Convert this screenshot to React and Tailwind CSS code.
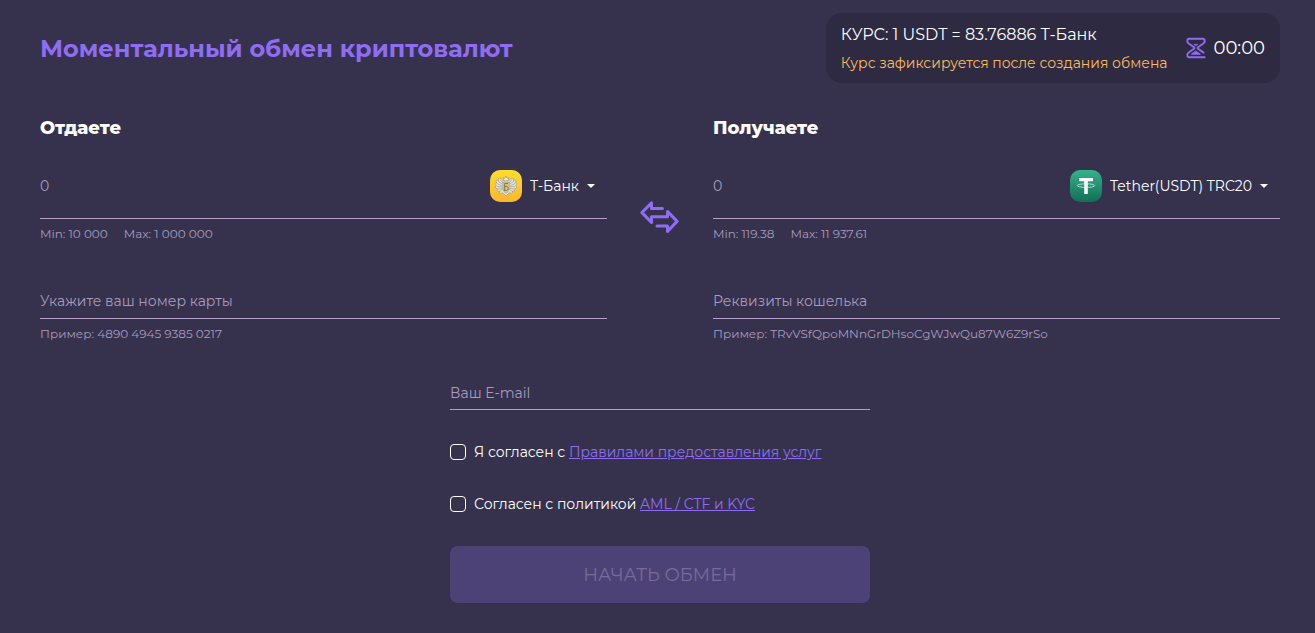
import React, { useState } from 'react'

const HourglassIcon = () => (
    <svg width="20" height="22" viewBox="0 0 20 22" fill="none" stroke="#8f6df2" strokeWidth="1.9" strokeLinecap="round" strokeLinejoin="round" aria-hidden="true">
        <path d="M18.6 4.6V3.2C18.6 2.2 18 1.8 17.2 1.8H2.8C1.9 1.8 1.4 2.3 1.4 3.2V4.4C1.4 5.6 2.2 6.2 3 6.7L8 10.2C8.6 10.7 8.6 11.3 8 11.8L3 15.3C2.2 15.8 1.4 16.5 1.4 17.6V18.8C1.4 19.7 1.9 20.2 2.8 20.2H18.6" />
        <path d="M18.6 4.6C18.6 5.7 17.8 6.3 17 6.8L12 10.2C11.4 10.7 11.4 11.3 12 11.8L17.6 15.6" />
        <path d="M8.2 7.4H11.8L10 8.6Z" fill="#8f6df2" strokeWidth="0.8" />
        <path d="M10 14.2L14.4 17.2H5.6Z" fill="#8f6df2" strokeWidth="1" />
    </svg>
)

const SwapIcon = () => (
    <svg width="40" height="36" viewBox="0 0 40 36" fill="none" stroke="#8f6df2" strokeWidth="3" strokeLinejoin="round" strokeLinecap="round" aria-hidden="true">
        <path d="M22.4 8.4H11.5V2.8L1.9 12.6L11.5 22.4V16.8H27.5V11.4L37.1 21.4L27.5 31.4V26H17" />
    </svg>
)

const BankIcon = () => (
    <svg width="32" height="32" viewBox="0 0 32 32" aria-hidden="true">
        <defs>
            <linearGradient id="bank-bg" x1="0" y1="0" x2="0" y2="1">
                <stop offset="0" stopColor="#ffdc2e" />
                <stop offset="1" stopColor="#fdb62d" />
            </linearGradient>
        </defs>
        <rect width="32" height="32" rx="10" fill="url(#bank-bg)" />
        <g fill="#e2e2dc" stroke="#85847c" strokeWidth="0.5">
            <path d="M13 10.5C10 7 7.5 8 8.5 10.5C5.5 9.5 5.5 11.5 7 12.8C4.5 12.6 4.5 15 6.5 15.6C4.5 16.8 5.5 19 7.5 18.6C6.5 20.8 8 22 9.8 21C9 23.4 11 24.4 12.5 22.6L16 26L19.5 22.6C21 24.4 23 23.4 22.2 21C24 22 25.5 20.8 24.5 18.6C26.5 19 27.5 16.8 25.5 15.6C27.5 15 27.5 12.6 25 12.8C26.5 11.5 26.5 9.5 23.5 10.5C24.5 8 22 7 19 10.5L16 9Z" />
            <path d="M8 11L12 14M7 13.5L12 16M7 16.5L12 17M8 19L12 18.5M24 11L20 14M25 13.5L20 16M25 16.5L20 17M24 19L20 18.5M10 9.5L13 13M22 9.5L19 13M10 21.5L13 18.5M22 21.5L19 18.5" />
            <path d="M13.2 7.5L15 8.5L16 6L17 8.5L18.8 7.5L18 10.6H14Z" fill="#f3f3ee" />
            <path d="M12.8 12H19.2V18.8C19.2 21 17.5 22.2 16 23.2C14.5 22.2 12.8 21 12.8 18.8Z" fill="#d9c777" />
        </g>
        <path d="M14.7 20.4V13.5H18M14.7 16.4H16.4C18.8 16.4 18.8 20.4 16.4 20.4H14" fill="none" stroke="#7a7347" strokeWidth="0.9" />
    </svg>
)

const TetherIcon = () => (
    <svg width="32" height="32" viewBox="0 0 32 32" fill="none" aria-hidden="true">
        <defs>
            <linearGradient id="tether-bg" x1="0" y1="0" x2="0" y2="1">
                <stop offset="0" stopColor="#35b28b" />
                <stop offset="1" stopColor="#126e54" />
            </linearGradient>
        </defs>
        <rect width="32" height="32" rx="10" fill="url(#tether-bg)" />
        <path d="M9 8H23V11.3H17.8V24H14.2V11.3H9Z" fill="#fff" />
        <ellipse cx="16" cy="15.6" rx="8.8" ry="1.8" stroke="#d5efe6" strokeWidth="0.8" />
    </svg>
)

const CurrencySelect = ({ id, label, icon, options }) => (
    <div className="flex items-center shrink-0 pr-2">
        {icon}
        <div className="relative">
            <select
                id={id}
                aria-label={label}
                className="field-sizing-content appearance-none bg-transparent pl-2 pr-5 h-8 text-sm text-white cursor-pointer focus:outline-none"
            >
                {options.map((option) => (
                    <option key={option} className="bg-[#2e2a41]">
                        {option}
                    </option>
                ))}
            </select>
            <svg className="absolute right-1 top-3.5 pointer-events-none" width="8" height="4" viewBox="0 0 8 4" aria-hidden="true">
                <path d="M0 0H8L4 4Z" fill="#fff" />
            </svg>
        </div>
    </div>
)

const ExchangeSide = ({ id, title, icon, currencies, min, max, placeholder, example }) => (
    <section className="min-w-0">
        <h2 className="text-lg leading-6 font-extrabold">{title}</h2>
        <div className="flex items-center h-[65px] mt-3.5 border-b border-[#b5a1c9]">
            <input
                id={`${id}-amount`}
                aria-label={title}
                placeholder="0"
                className="flex-1 min-w-0 h-10 bg-transparent text-sm placeholder:text-[#a99bbd] focus:outline-none"
            />
            <CurrencySelect id={`${id}-currency`} label={title} icon={icon} options={currencies} />
        </div>
        <div className="flex gap-4 mt-[5px] text-xs leading-5 text-[#a99bbd]">
            <span>Min: {min}</span>
            <span>Max: {max}</span>
        </div>
        <input
            id={`${id}-account`}
            aria-label={placeholder}
            placeholder={placeholder}
            className="block w-full h-[35px] mt-10 border-b border-[#b5a1c9] bg-transparent text-sm placeholder:text-[#a99bbd] focus:outline-none"
        />
        <p className="mt-[5px] text-xs leading-5 text-[#a99bbd]">Пример: {example}</p>
    </section>
)

const Agreement = ({ id, text, link, checked, onChange }) => (
    <div className="flex items-center gap-2 h-5 text-sm whitespace-nowrap">
        <input
            id={id}
            type="checkbox"
            checked={checked}
            onChange={(e) => onChange(e.target.checked)}
            className="appearance-none size-4 rounded border border-white checked:bg-[#8f6df2]"
        />
        <label htmlFor={id}>
            {text}{' '}
            <a href="#" className="text-[#8f6df2] underline">
                {link}
            </a>
        </label>
    </div>
)

const App = () => {
    const [rules, setRules] = useState(false)
    const [aml, setAml] = useState(false)

    return (
        <main className="min-h-screen bg-[#36324e] pt-[13px] pb-[30px] pl-10 pr-[35px] font-['Montserrat','Inter',sans-serif] text-white">
            <header className="flex items-center justify-between">
                <h1 className="pt-0.5 text-2xl leading-8 font-bold text-[#8f6df2]">Моментальный обмен криптовалют</h1>
                <div className="flex items-center gap-[18px] h-[70px] px-[15px] rounded-2xl bg-[#2e2a41]">
                    <div className="pt-0.5">
                        <p className="text-base leading-7">КУРС: 1 USDT = 83.76886 Т-Банк</p>
                        <p className="text-sm leading-7 text-[#fbbc5a]">Курс зафиксируется после создания обмена</p>
                    </div>
                    <div className="flex items-center gap-2 text-lg">
                        <HourglassIcon />
                        <span>00:00</span>
                    </div>
                </div>
            </header>

            <form onSubmit={(e) => e.preventDefault()}>
                <div className="grid grid-cols-[1fr_106px_1fr] mt-[33px]">
                    <ExchangeSide
                        id="give"
                        title="Отдаете"
                        icon={<BankIcon />}
                        currencies={['Т-Банк']}
                        min="10 000"
                        max="1 000 000"
                        placeholder="Укажите ваш номер карты"
                        example="4890 4945 9385 0217"
                    />
                    <button type="button" aria-label="swap" className="self-start justify-self-center mt-[84px] cursor-pointer">
                        <SwapIcon />
                    </button>
                    <ExchangeSide
                        id="get"
                        title="Получаете"
                        icon={<TetherIcon />}
                        currencies={['Tether(USDT) TRC20']}
                        min="119.38"
                        max="11 937.61"
                        placeholder="Реквизиты кошелька"
                        example="TRvVSfQpoMNnGrDHsoCgWJwQu87W6Z9rSo"
                    />
                </div>

                <div className="w-full max-w-[420px] mx-auto mt-8">
                    <input
                        type="email"
                        aria-label="Ваш E-mail"
                        placeholder="Ваш E-mail"
                        className="block w-full h-[34px] border-b border-[#b5a1c9] bg-transparent text-sm placeholder:text-[#a99bbd] focus:outline-none"
                    />
                    <div className="flex flex-col gap-8 mt-8">
                        <Agreement id="rules" text="Я согласен с" link="Правилами предоставления услуг" checked={rules} onChange={setRules} />
                        <Agreement id="aml" text="Согласен с политикой" link="AML / CTF и KYC" checked={aml} onChange={setAml} />
                    </div>
                    <button
                        type="submit"
                        disabled={!rules || !aml}
                        className="w-full h-[57px] mt-8 rounded-lg bg-[#8f6df2] text-lg text-white disabled:bg-[#4d4276] disabled:text-[#766c98]"
                    >
                        НАЧАТЬ ОБМЕН
                    </button>
                </div>
            </form>
        </main>
    )
}

export default App
